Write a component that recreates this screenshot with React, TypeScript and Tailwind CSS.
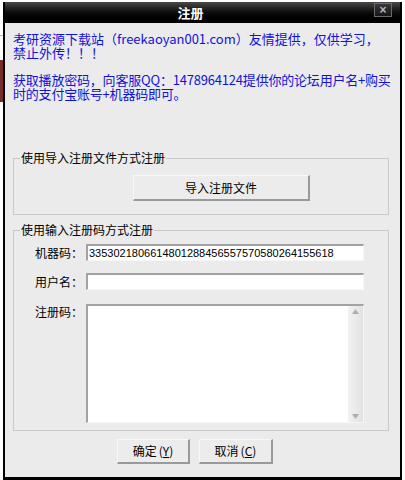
import React from 'react';

const cjk = { fontFamily: '"Noto Sans CJK SC", "Liberation Sans", sans-serif' };

function Field({ label, children, top = false }: { label: string; children: React.ReactNode; top?: boolean }) {
    return (
        <div className={`flex pl-[21px] leading-[14px] ${top ? 'items-start' : 'items-center'}`}>
            <div className={`w-[48px] text-[12px] leading-[14px] text-black ${top ? 'pt-[1px]' : ''}`}>{label}</div>
            <div className="ml-[3px]">{children}</div>
        </div>
    );
}

const inputCls =
    'block w-[278px] h-[17px] bg-white border-t-2 border-l-2 border-r border-b border-t-[#a2a2a2] border-l-[#a2a2a2] border-r-[#f6f6f6] border-b-[#f6f6f6] px-[1px] text-[11px] leading-[13px] text-black outline-none';

function WinButton({ children, w }: { children: React.ReactNode; w: string }) {
    return (
        <button
            className={`${w} bg-[#ececec] border-t border-l border-r-2 border-b-2 border-t-[#f7f7f7] border-l-[#f7f7f7] border-r-[#9a9a9a] border-b-[#9a9a9a] text-[12px] leading-[14px] text-black flex items-center justify-center`}
        >
            {children}
        </button>
    );
}

export default function App() {
    return (
        <div className="w-[405px] h-[480px] bg-white flex overflow-hidden" style={cjk}>
            {/* page behind the dialog */}
            <div className="w-[3px] flex flex-col">
                <div className="h-[35px]" />
                <div className="h-px bg-[#b8b8b8]" />
                <div className="h-[24px]" />
                <div className="h-[42px] bg-[#7a2a2a]" />
            </div>

            <div className="w-[399px] h-[478px] mt-[2px] border-x-2 border-b-[3px] border-black flex flex-col">
                {/* title bar */}
                <div className="relative h-[21px] bg-linear-to-b from-[#4a4a4a] via-[#0c0c0c] to-black flex items-center justify-center pr-[24px]">
                    <span className="text-white font-bold text-[13px] leading-none">注册</span>
                    <div className="absolute right-[8px] top-[1px] w-[18px] h-[14px] border border-[#6b6b6b] bg-linear-to-b from-[#3a3a3a] to-[#161616] flex items-center justify-center">
                        <span className="text-[#b4b4b4] text-[12px] font-bold leading-none" style={{ fontFamily: '"Liberation Sans", sans-serif' }}>×</span>
                    </div>
                </div>

                <div className="flex-1 bg-[#ebebeb] px-[8px] pt-[9px]">
                    <div className="text-[13px] leading-[14px] text-[#1212dc] whitespace-nowrap">
                        <p>
                            考研资源下载站（freekaoyan001.com）友情提供，仅供学习，
                            <br />
                            禁止外传！！！
                        </p>
                        <p className="mt-[13px] tracking-[-0.2px]">
                            获取播放密码，向客服QQ：1478964124提供你的论坛用户名+购买
                            <br />
                            时的支付宝账号+机器码即可。
                        </p>
                    </div>

                    <fieldset className="mt-[51px] w-[376px] border border-[#c9c9c9] pb-[13px]">
                        <legend className="ml-[6px] px-[1px] text-[12px] leading-[12px] text-black">使用导入注册文件方式注册</legend>
                        <div className="mt-[11px] ml-[119px]">
                            <WinButton w="w-[177px] h-[26px]">导入注册文件</WinButton>
                        </div>
                    </fieldset>

                    <fieldset className="mt-[9px] w-[376px] border border-[#c9c9c9] pb-[7px]">
                        <legend className="ml-[6px] px-[1px] text-[12px] leading-[12px] text-black">使用输入注册码方式注册</legend>
                        <div className="mt-[8px]">
                            <Field label="机器码：">
                                <input
                                    readOnly
                                    defaultValue="3353021806614801288456557570580264155618"
                                    className={inputCls}
                                    style={{ fontFamily: '"Liberation Sans", sans-serif' }}
                                />
                            </Field>
                        </div>
                        <div className="mt-[12px]">
                            <Field label="用户名：">
                                <input readOnly defaultValue="" className={inputCls} />
                            </Field>
                        </div>
                        <div className="mt-[14px]">
                            <Field label="注册码：" top>
                                <div className="w-[278px] h-[119px] bg-white border-t-2 border-l-2 border-r border-b border-t-[#a2a2a2] border-l-[#a2a2a2] border-r-[#f6f6f6] border-b-[#f6f6f6] flex">
                                    <div className="flex-1" />
                                    <div className="w-[15px] bg-linear-to-r from-[#f2f2f2] to-[#e2e2e2] flex flex-col items-center justify-between py-[3px]">
                                        <svg width="7" height="5" viewBox="0 0 7 5">
                                            <path d="M0 5 L3.5 0 L7 5 Z" fill="#a9b0b8" />
                                        </svg>
                                        <svg width="7" height="5" viewBox="0 0 7 5">
                                            <path d="M0 0 L3.5 5 L7 0 Z" fill="#a9b0b8" />
                                        </svg>
                                    </div>
                                </div>
                            </Field>
                        </div>
                    </fieldset>

                    <div className="mt-[8px] ml-[104px] flex gap-[9px]">
                        <WinButton w="w-[73px] h-[25px]">
                            确定<span className="ml-[2px]">(<u>Y</u>)</span>
                        </WinButton>
                        <WinButton w="w-[74px] h-[25px]">
                            取消<span className="ml-[2px]">(<u>C</u>)</span>
                        </WinButton>
                    </div>
                </div>
            </div>
            <div className="flex-1" />
        </div>
    );
}
